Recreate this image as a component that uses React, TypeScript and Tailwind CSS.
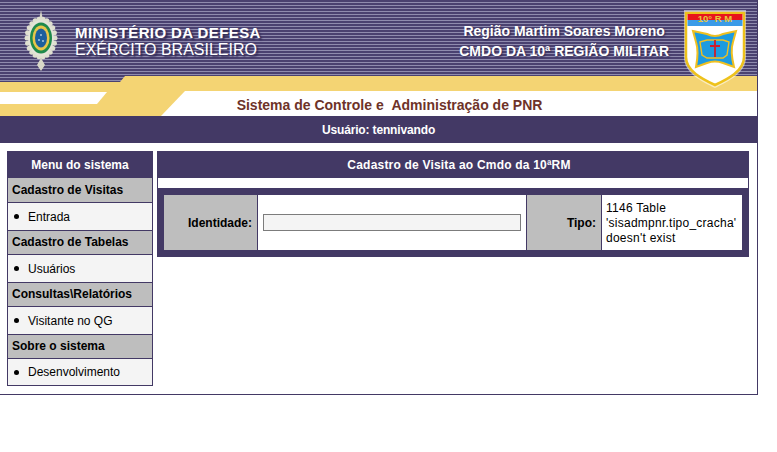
const menu = [
  { title: 'Cadastro de Visitas', item: 'Entrada' },
  { title: 'Cadastro de Tabelas', item: 'Usuários' },
  { title: 'Consultas\\Relatórios', item: 'Visitante no QG' },
  { title: 'Sobre o sistema', item: 'Desenvolvimento' },
]

function Badge() {
  const dots = Array.from({ length: 22 }, (_, i) => (i / 22) * Math.PI * 2)
  return (
    <svg width="40" height="62" viewBox="0 0 40 62">
      <path d="M20 0l2 10h-4zM20 48l4 7-4 6-4-6z" fill="#d8d8c8" />
      {dots.map((a) => (
        <circle key={a} cx={20 + Math.cos(a) * 14} cy={28 + Math.sin(a) * 19} r="2.5" fill="#dfe0d0" />
      ))}
      <ellipse cx="20" cy="28" rx="13" ry="18" fill="#e4e4d8" />
      <ellipse cx="20" cy="28" rx="11" ry="15.5" fill="#1f8a4c" />
      <ellipse cx="20" cy="28" rx="8.5" ry="12.5" fill="#e8c64a" />
      <ellipse cx="20" cy="28" rx="6" ry="9.5" fill="#1d5f9e" />
      <circle cx="20" cy="25" r="0.9" fill="#b8d4e8" />
      <circle cx="18" cy="30" r="0.9" fill="#b8d4e8" />
      <circle cx="22" cy="31" r="0.9" fill="#b8d4e8" />
    </svg>
  )
}

function Shield() {
  return (
    <svg width="64" height="80" viewBox="0 0 64 80">
      <path d="M1 1H63V48C63 64 46 72 32 79C18 72 1 64 1 48Z" fill="#fff" opacity="0.55" />
      <path d="M3 4H61V48C61 62 45 70 32 76C19 70 3 62 3 48Z" fill="#fff" stroke="#eec21c" strokeWidth="2.5" />
      <rect x="4.5" y="5" width="55" height="6" fill="#e8141c" />
      <rect x="4.5" y="11" width="55" height="6" fill="#3a9be8" />
      <text x="32" y="12.5" textAnchor="middle" fontSize="9.5" fontWeight="700" fill="#e8c83c" fontFamily="Liberation Sans, Arial, sans-serif">10° R M</text>
      <path d="M10 22L24 25Q32 29 40 25L53 22L50 33Q47 42 51 58L40 54Q32 51 24 54L13 58Q16 42 13 33Z" fill="#1d9be0" stroke="#f0c020" strokeWidth="2" />
      <path d="M17 33L24 31H40L46 33L44 46L40 49H24L19 46Z" fill="none" stroke="#f0c020" strokeWidth="1.4" />
      <path d="M32 31V48M27 37H37" stroke="#d01c2c" strokeWidth="1.8" />
    </svg>
  )
}

export default function App() {
  return (
    <div className="w-[758px] h-[395px] bg-white border-r border-b border-[#433965] font-['Liberation_Sans',Arial,sans-serif] text-[12px] text-black">
      <header className="relative h-[116px] bg-white overflow-hidden">
        <div className="h-[82px] bg-[repeating-linear-gradient(180deg,#4a4170_0px,#4a4170_2px,#8f8bae_2px,#8f8bae_3px)] flex items-center justify-between pl-[21px] pr-[88px]">
          <div className="flex items-center gap-[14px]">
            <Badge />
            <div className="text-white [text-shadow:2px_2px_2px_#2c2650]">
              <div className="text-[15px] leading-[17px] font-bold tracking-[0.4px]">MINISTÉRIO DA DEFESA</div>
              <div className="text-[16px] leading-[17px]">EXÉRCITO BRASILEIRO</div>
            </div>
          </div>
          <div className="text-white text-center font-bold text-[14px] leading-[20px] [text-shadow:1px_1px_2px_#2c2650]">
            <div>Região Martim Soares Moreno</div>
            <div>CMDO DA 10ª REGIÃO MILITAR</div>
          </div>
        </div>
        <div className="absolute inset-x-0 top-[76px] h-[40px] bg-[#f4d473] [clip-path:polygon(0_6px,120px_6px,125px_0,100%_0,100%_100%,0_100%)]" />
        <div className="absolute right-0 top-[91px] left-[161px] h-[25px] bg-white [clip-path:polygon(24px_0,100%_0,100%_100%,0_100%)] flex items-center justify-center pt-[4px]">
          <span className="text-[14px] font-bold text-[#6e3328] mr-[139px]">Sistema de Controle e &nbsp;Administração de PNR</span>
        </div>
        <div className="absolute left-0 top-[92px] w-[107px] h-[12px] bg-white [clip-path:polygon(0_0,100%_0,calc(100%-10px)_100%,0_100%)]" />
        <div className="absolute left-[683px] top-[9px]">
          <Shield />
        </div>
      </header>

      <div className="h-[27px] bg-[#433965] text-white font-bold flex items-center justify-center tracking-[-0.15px]">Usuário: tennivando</div>

      <main className="flex items-start gap-[4px] pl-[7px] pt-[8px]">
        <aside className="w-[146px] border border-[#433965] border-t-0 bg-[#f4f4f4]">
          <div className="h-[27px] -mx-px bg-[#433965] text-white font-bold flex items-center justify-center">Menu do sistema</div>
          {menu.map((m, i) => (
            <div key={m.title}>
              <div className={`h-[25px] bg-[#bebebe] font-bold flex items-center pl-[4px] border-b border-[#433965] ${i > 0 ? 'border-t pb-[1px]' : ''}`}>{m.title}</div>
              <div className={`flex items-center pl-[6px] gap-[9px] ${i === 3 ? 'h-[26px]' : 'h-[27px]'}`}>
                <span className="w-[5px] h-[5px] rounded-full bg-black" />
                <span>{m.item}</span>
              </div>
            </div>
          ))}
        </aside>

        <section className="w-[592px] bg-[#433965]">
          <div className="h-[27px] text-white font-bold flex items-center justify-center pl-[12px] tracking-[0.2px]">Cadastro de Visita ao Cmdo da 10ªRM</div>
          <div className="h-[10px] bg-white mx-px" />
          <div className="px-[7px] py-[7px]">
            <div className="flex h-[55px] gap-px">
              <div className="w-[93px] bg-[#bebebe] font-bold flex items-center justify-end pr-[5px]">Identidade:</div>
              <div className="w-[268px] bg-white flex items-center pl-[5px]">
                <input className="w-[258px] h-[17px] bg-[#f4f4f4] border border-[#7c7c7c]" />
              </div>
              <div className="w-[74px] bg-[#bebebe] font-bold flex items-center justify-end pr-[5px]">Tipo:</div>
              <div className="flex-1 bg-white pl-[4px] pt-[2px] flex items-center leading-[15px] tracking-[0.25px]">
                <div>1146 Table 'sisadmpnr.tipo_cracha' doesn't exist</div>
              </div>
            </div>
          </div>
        </section>
      </main>
    </div>
  )
}
